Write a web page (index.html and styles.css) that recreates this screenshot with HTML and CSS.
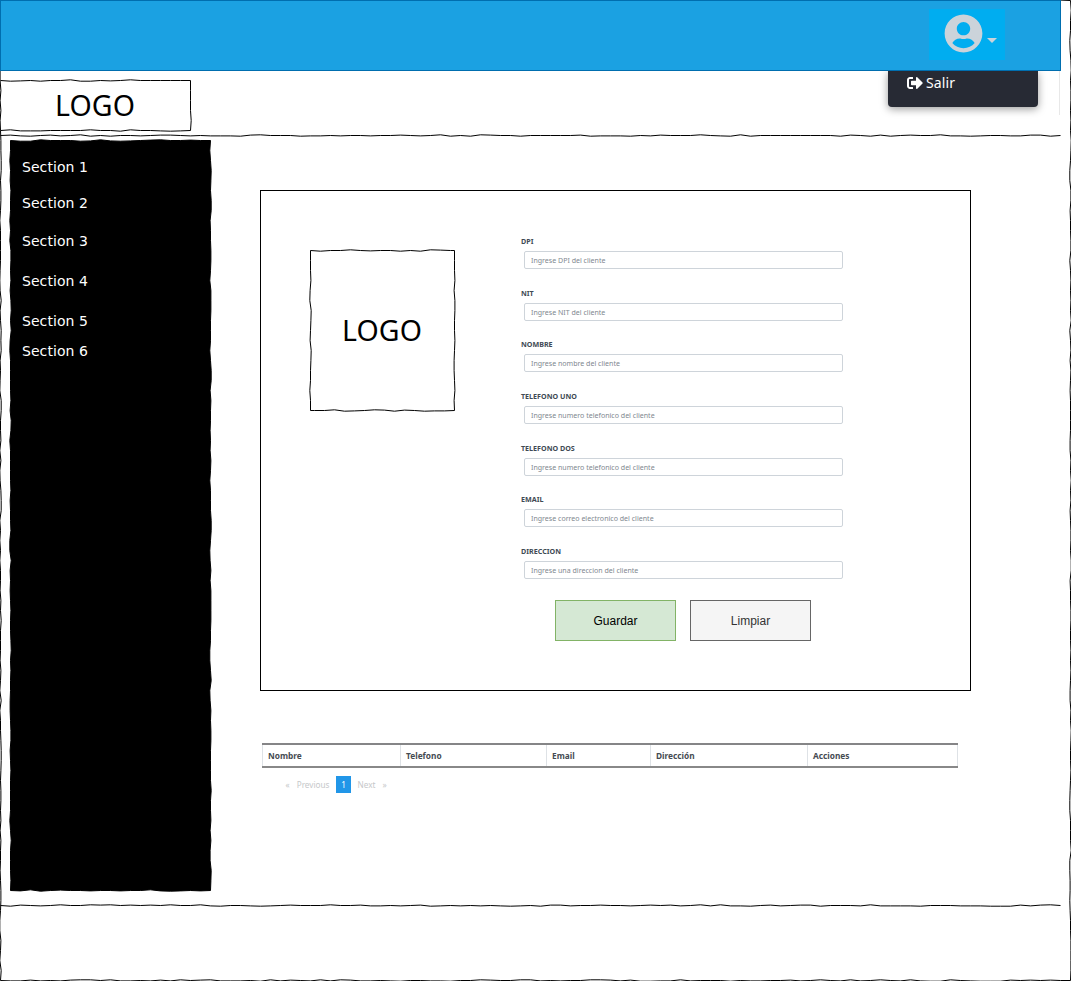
FILE: index.html
```html
<!DOCTYPE html>
<html lang="es">
<head>
<meta charset="utf-8">
<title>Clientes</title>
<link rel="stylesheet" href="styles.css">
</head>
<body>
<div class="page">
  <svg class="sketch" data-edges="top right bottom left" data-seed="7"></svg>
  <header class="topbar">
    <div class="user">
      <svg class="avatar" viewBox="0 0 496 512"><path d="M248 8C111 8 0 119 0 256s111 248 248 248 248-111 248-248S385 8 248 8zm0 96c48.600 0 88 39.400 88 88s-39.400 88-88 88-88-39.400-88-88 39.400-88 88-88zm0 344c-58.700 0-111.300-26.600-146.500-68.200 18.800-35.400 55.600-59.800 98.500-59.800 2.400 0 4.800.4 7.100 1.100 13 4.200 26.600 6.900 40.900 6.900 14.300 0 28-2.700 40.900-6.900 2.300-.7 4.700-1.100 7.100-1.100 42.900 0 79.700 24.400 98.500 59.800C359.300 421.400 306.700 448 248 448z"/></svg>
      <span class="caret"></span>
    </div>
    <div class="menu">
      <svg class="exit" viewBox="0 0 512 512"><path d="M497 273L329 441c-15 15-41 4.500-41-17v-96H152c-13.300 0-24-10.700-24-24v-96c0-13.300 10.700-24 24-24h136V88c0-21.400 25.900-32 41-17l168 168c9.300 9.400 9.300 24.600 0 34zM192 436v-40c0-6.600-5.400-12-12-12H96c-17.700 0-32-14.300-32-32V160c0-17.700 14.300-32 32-32h84c6.600 0 12-5.400 12-12V76c0-6.600-5.400-12-12-12H96c-53 0-96 43-96 96v192c0 53 43 96 96 96h84c6.600 0 12-5.400 12-12z"/></svg>
      <span>Salir</span>
    </div>
  </header>
  <div class="brandbar">
    <div class="brand logo"><svg class="sketch" data-edges="top right bottom" data-seed="3"></svg><span>LOGO</span></div>
    <svg class="sketch" data-edges="bottom" data-seed="11"></svg>
    <i class="scroll-edge"></i>
  </div>
  <div class="body">
    <nav class="sidebar">
      <svg class="sketch filled" data-edges="top right bottom left" data-seed="5"></svg>
      <a>Section 1</a><a>Section 2</a><a>Section 3</a><a>Section 4</a><a>Section 5</a><a>Section 6</a>
    </nav>
    <main class="content">
      <section class="panel">
        <div class="picture logo"><svg class="sketch" data-edges="top right bottom left" data-seed="9"></svg><span>LOGO</span></div>
        <form class="form">
          <label>DPI<input placeholder="Ingrese DPI del cliente"></label>
          <label>NIT<input placeholder="Ingrese NIT del cliente"></label>
          <label>NOMBRE<input placeholder="Ingrese nombre del cliente"></label>
          <label>TELEFONO UNO<input placeholder="Ingrese numero telefonico del cliente"></label>
          <label>TELEFONO DOS<input placeholder="Ingrese numero telefonico del cliente"></label>
          <label>EMAIL<input placeholder="Ingrese correo electronico del cliente"></label>
          <label>DIRECCION<input placeholder="Ingrese una direccion del cliente"></label>
          <div class="actions">
            <button class="btn save" type="button">Guardar</button>
            <button class="btn clear" type="button">Limpiar</button>
          </div>
        </form>
      </section>
      <div class="table">
        <div>Nombre</div><div>Telefono</div><div>Email</div><div>Dirección</div><div>Acciones</div>
      </div>
      <div class="pager"><span>«</span><span class="prev">Previous</span><b>1</b><span class="next">Next</span><span>»</span></div>
    </main>
  </div>
  <footer class="footer"><svg class="sketch" data-edges="top" data-seed="21"></svg></footer>
</div>
<script src="sketch.js"></script>
</body>
</html>
```
FILE: styles.css
```css
* { box-sizing: border-box; }
body { margin: 0; background: #fff; }
.page { position: relative; width: 1071px; height: 981px; overflow: hidden; display: flex; flex-direction: column; font-family: "Noto Sans", sans-serif; }
.sketch { position: absolute; left: 0; top: 0; width: 100%; height: 100%; overflow: visible; pointer-events: none; }
.sketch path { fill: none; stroke: #000; stroke-width: 1; }
.sketch.filled path { fill: #000; }

.topbar { position: relative; z-index: 2; width: 1061px; height: 71px; flex: none; background: #1ba1e2; border: 1px solid #006eaf; display: flex; justify-content: flex-end; padding: 8px 55px 0 0; }
.user { width: 76px; height: 51px; background: #00adf0; display: flex; padding: 5px 0 0 15px; gap: 4px; }
.avatar { width: 39px; height: 39px; fill: #cbd3da; }
.caret { width: 0; height: 0; margin-top: 24px; border: 5px solid transparent; border-top-color: #cbd3da; border-bottom: 0; }
.menu { position: absolute; left: 887px; top: 70px; width: 150px; height: 36px; background: #272a34; border-radius: 0 0 4px 4px; box-shadow: 0 2px 8px rgba(0,0,0,.4); clip-path: inset(0 -14px -14px -14px); display: flex; gap: 3px; padding: 2px 0 0 19px; color: #fff; font-size: 14px; line-height: 20px; letter-spacing: .1px; }
.exit { width: 16px; height: 16px; margin-top: 2px; fill: #fff; }

.brandbar { position: relative; width: 1061px; height: 65px; flex: none; padding-top: 9px; }
.scroll-edge { position: absolute; right: 1px; top: 0; width: 1px; height: 44px; background: #e8e8e8; }
.logo { position: relative; display: flex; align-items: center; justify-content: center; font: 28.5px/36px "Noto Sans", sans-serif; }
.logo span { padding: 0 1px 2px 0; letter-spacing: .1px; }
.brand { width: 191px; height: 51px; }

.body { display: flex; height: 769px; flex: none; padding: 4px 0 0 10px; }
.sidebar { position: relative; width: 201px; height: 751px; padding: 17px 0 0 12px; display: grid; grid-template-rows: 36px 38px 40px 40px 30px 20px; align-content: start; color: #fff; font: 14px/20px "DejaVu Sans", sans-serif; letter-spacing: .06px; }
.sidebar a { position: relative; }
.content { margin: 50px 0 0 49px; width: 711px; }
.panel { width: 711px; height: 501px; border: 1px solid #000; display: flex; padding: 45px 0 0 49px; }
.picture { width: 145px; height: 161px; margin-top: 14px; }
.form { margin-left: 66px; width: 322px; }
.form label { display: block; height: 51.65px; color: #404a54; font-size: 7.15px; font-weight: 700; line-height: 11px; }
.form input { display: block; width: 319px; height: 18px; margin: 4px 0 0 3px; padding: 0 6px; border: 1px solid #ced4da; border-radius: 2px; outline: 0; font: 7.05px "Noto Sans", sans-serif; }
.form input::placeholder { color: #7f8890; opacity: 1; }
.actions { display: flex; gap: 14px; padding: 3px 0 0 34px; }
.btn { width: 121px; height: 41px; padding: 0; font: 12px "Liberation Sans", sans-serif; }
.save { background: #d5e8d4; border: 1px solid #82b366; color: #000; }
.clear { background: #f5f5f5; border: 1px solid #666; color: #333; }

.table { display: grid; grid-template-columns: 138px 146px 104px 157px 151px; width: 696px; height: 25px; margin: 52px 0 0 2px; border-top: 2px solid #858587; border-bottom: 2px solid #888; }
.table div { border-left: 1px solid #dee2e6; padding-left: 5px; font-size: 8.3px; font-weight: 700; line-height: 21px; color: #454b52; }
.table div:last-child { border-right: 1px solid #dee2e6; }
.pager { display: flex; margin: 8px 0 0 25.500px; font-size: 8.200px; line-height: 18px; color: #c6c8ca; }
.pager b { width: 15px; height: 17px; margin: 0 6.500px; background: #2196e8; color: #fff; text-align: center; font-weight: 400; }
.prev { margin-left: 7px; }
.next { margin-right: 7px; }

.footer { position: relative; width: 1061px; height: 76px; }
```
FILE: sketch.js
```js
// Draws hand-sketched edges: a vertex every 10px, nudged by a small seeded offset.
const NUDGES = [0, 0, 0.4, -0.4, 0.7, -0.7, 0, 0.4];

document.querySelectorAll('.sketch').forEach(svg => {
  let seed = Number(svg.dataset.seed) * 7919;
  const nudge = () => {
    seed = (seed * 1103515245 + 12345) % 2147483648;
    return NUDGES[Math.floor(seed / 65536) % NUDGES.length];
  };
  const edges = svg.dataset.edges.split(' ');
  const box = svg.parentElement.getBoundingClientRect();
  const w = box.width - 0.5;
  const h = box.height - 0.5;
  const line = (x1, y1, x2, y2) => {
    const length = Math.abs(x2 - x1) + Math.abs(y2 - y1);
    const points = [];
    for (let d = 0; d < length; d += 10) {
      const t = d / length;
      const n = d ? nudge() : 0;
      points.push([x1 + (x2 - x1) * t + (y1 === y2 ? 0 : n), y1 + (y2 - y1) * t + (y1 === y2 ? n : 0)]);
    }
    points.push([x2, y2]);
    return points;
  };
  const sides = {
    top: [0.5, 0.5, w, 0.5],
    right: [w, 0.5, w, h],
    bottom: [w, h, 0.5, h],
    left: [0.5, h, 0.5, 0.5]
  };
  const runs = edges.map(e => line(...sides[e]));
  const path = document.createElementNS('http://www.w3.org/2000/svg', 'path');
  path.setAttribute('d', 'M' + runs.flat().map(p => p.join(' ')).join('L'));
  svg.appendChild(path);
});
```
